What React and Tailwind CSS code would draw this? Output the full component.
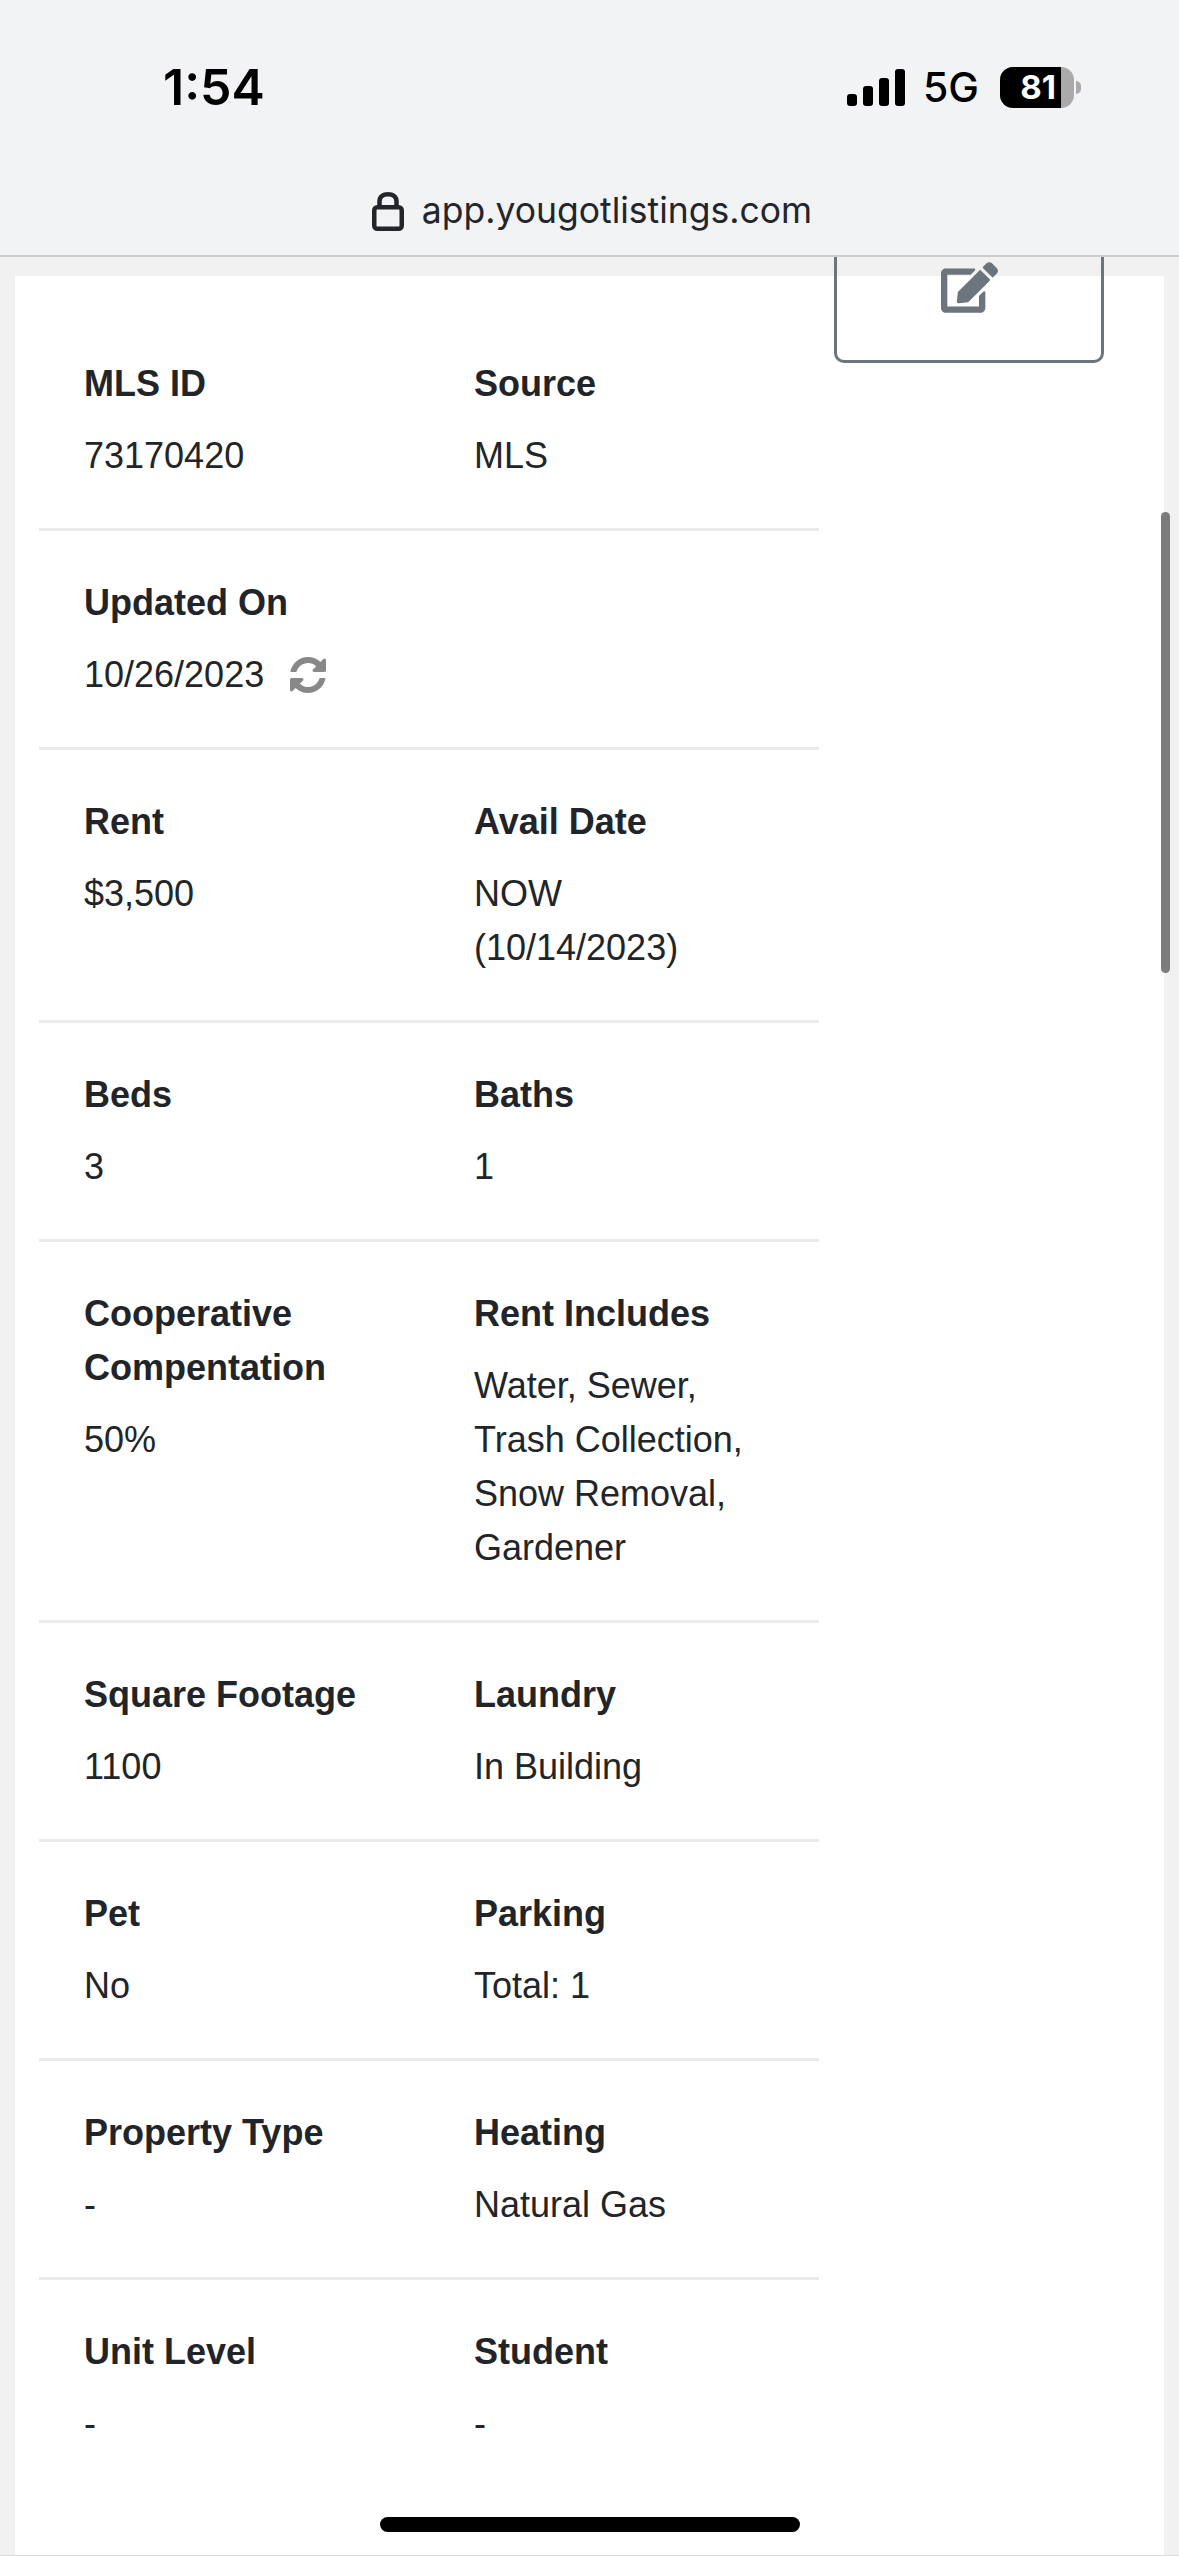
import { FaEdit } from "react-icons/fa";

const rows = [
  [{ label: "MLS ID", value: "73170420" }, { label: "Source", value: "MLS" }],
  [{ label: "Updated On", value: "10/26/2023", sync: true }],
  [{ label: "Rent", value: "$3,500" }, { label: "Avail Date", value: "NOW (10/14/2023)" }],
  [{ label: "Beds", value: "3" }, { label: "Baths", value: "1" }],
  [
    { label: "Cooperative Compentation", value: "50%" },
    { label: "Rent Includes", value: "Water, Sewer, Trash Collection, Snow Removal, Gardener" },
  ],
  [{ label: "Square Footage", value: "1100" }, { label: "Laundry", value: "In Building" }],
  [{ label: "Pet", value: "No" }, { label: "Parking", value: "Total: 1" }],
  [{ label: "Property Type", value: "-" }, { label: "Heating", value: "Natural Gas" }],
  [{ label: "Unit Level", value: "-" }, { label: "Student", value: "-" }],
];

function Signal() {
  return (
    <svg width="58" height="37" viewBox="0 0 58 37" className="block">
      <rect x="0" y="25" width="10" height="12" rx="3" fill="#000" />
      <rect x="16" y="17" width="10" height="20" rx="3" fill="#000" />
      <rect x="32" y="9" width="10" height="28" rx="3" fill="#000" />
      <rect x="48" y="0" width="10" height="37" rx="3" fill="#000" />
    </svg>
  );
}

function Battery() {
  return (
    <div className="flex items-center">
      <div className="relative flex h-[41px] w-[74px] items-center overflow-hidden rounded-[13px] bg-[#aaaaaa]">
        <div className="flex h-full w-[61px] items-center justify-end bg-black pr-[5px] font-['Inter',sans-serif] text-[33px] font-bold leading-none text-white">
          81
        </div>
      </div>
      <div className="ml-[2px] h-[13px] w-[5px] rounded-r-full bg-[#aaaaaa]" />
    </div>
  );
}

function Lock() {
  return (
    <svg width="32" height="39" viewBox="0 0 32 39" fill="none" stroke="#23252b" strokeWidth="4.5" className="block">
      <rect x="2.25" y="15.25" width="27.5" height="21.5" rx="3" />
      <path d="M7.5 15V9.5C7.5 4.8 11 2.25 16 2.25S24.5 4.8 24.5 9.5V15" />
    </svg>
  );
}

function Refresh() {
  return (
    <svg width="36" height="36" viewBox="128 128 1536 1536" fill="#888888" className="ml-[26px] block">
      <path d="M1639 1056q0 5-1 7-64 268-268 434.500t-478 166.500q-146 0-282.500-55t-243.500-157l-129 129q-19 19-45 19t-45-19-19-45v-448q0-26 19-45t45-19h448q26 0 45 19t19 45-19 45l-137 137q71 66 161 102t187 36q134 0 250-65t186-179q11-17 53-117 8-23 30-23h192q13 0 22.500 9.500t9.500 22.500zm25-800v448q0 26-19 45t-45 19h-448q-26 0-45-19t-19-45 19-45l138-138q-148-137-349-137-134 0-250 65t-186 179q-11 17-53 117-8 23-30 23h-199q-13 0-22.500-9.500t-9.500-22.500v-7q65-268 270-434.500t480-166.500q146 0 284 55.500t245 156.500l130-129q19-19 45-19t45 19 19 45z" />
    </svg>
  );
}

function Field({ label, value, sync }) {
  return (
    <div>
      <div className="mb-[18px] font-bold">{label}</div>
      <div className="flex items-center">
        <span>{value}</span>
        {sync && <Refresh />}
      </div>
    </div>
  );
}

export default function App() {
  return (
    <div className="relative flex h-[2556px] w-[1179px] flex-col overflow-hidden border-b border-[#dcdcdc] bg-[#f1f1f1]">
      <header className="h-[257px] shrink-0 border-b-2 border-[#cdcdcf] bg-[#f2f3f5]">
        <div className="flex items-center justify-between pl-[163px] pr-[98px] pt-[62px]">
          <span className="font-['Inter',sans-serif] text-[50px] font-semibold leading-[50px] text-black">1:54</span>
          <div className="flex items-center">
            <Signal />
            <span className="ml-[18px] mr-[21px] font-['Inter',sans-serif] text-[41px] font-medium leading-[40px] text-black">5G</span>
            <Battery />
          </div>
        </div>
        <div className="mt-[77px] flex items-center justify-center pl-[5px]">
          <Lock />
          <span className="ml-[18px] font-['Inter',sans-serif] text-[35.5px] leading-[44px] text-[#23252b]">app.yougotlistings.com</span>
        </div>
      </header>

      <main className="flex-1 overflow-hidden px-[15px] pt-[19px]">
        <div className="flex h-full bg-white pl-[24px] font-['Liberation_Sans',Arial,sans-serif] text-[36px] leading-[54px] text-[#212529]">
          <div className="w-[780px] shrink-0 pt-[36px]">
            {rows.map((row, i) => (
              <div
                key={i}
                className="grid grid-cols-[300px_300px] gap-x-[90px] border-b-[3px] border-[#ebebeb] py-[45px] pl-[45px] pr-[45px] last:border-b-0"
              >
                {row.map((f) => (
                  <Field key={f.label} {...f} />
                ))}
              </div>
            ))}
          </div>
          <button className="ml-[15px] mt-[-65px] flex h-[152px] w-[270px] shrink-0 items-center justify-center rounded-[10px] border-[3px] border-[#6c757d] text-[#6c757d]">
            <FaEdit className="text-[57px]" />
          </button>
        </div>
      </main>

      {/* scrollbar + home bar sit on top of the page */}
      <div className="absolute left-[1161px] top-[512px] h-[461px] w-[9px] rounded-full bg-[#7c7c7c]" />
      <div className="absolute left-[380px] top-[2517px] h-[15px] w-[420px] rounded-full bg-black" />
    </div>
  );
}
